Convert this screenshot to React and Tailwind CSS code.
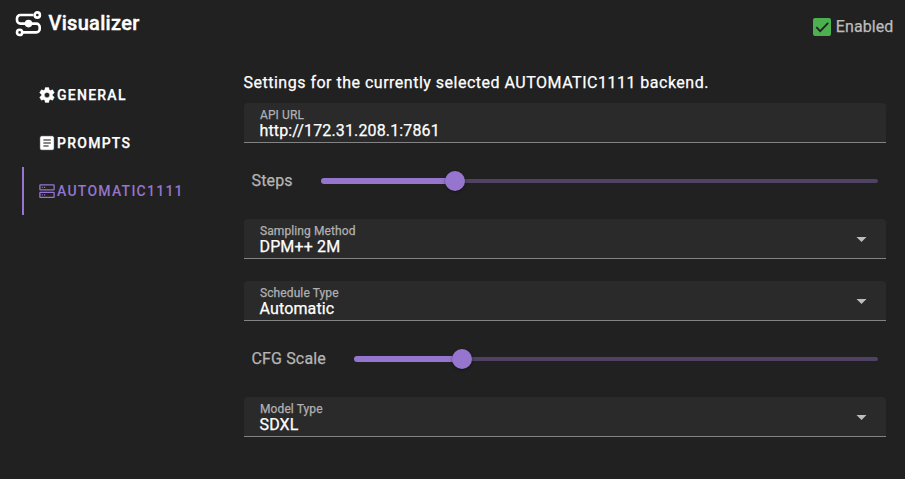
import React from "react";

const COG =
  "M12,15.5A3.5,3.5 0 0,1 8.5,12A3.5,3.5 0 0,1 12,8.5A3.5,3.5 0 0,1 15.5,12A3.5,3.5 0 0,1 12,15.5M19.43,12.97C19.47,12.65 19.5,12.33 19.5,12C19.5,11.67 19.47,11.34 19.43,11L21.54,9.37C21.73,9.22 21.78,8.95 21.66,8.73L19.66,5.27C19.54,5.05 19.27,4.96 19.05,5.05L16.56,6.05C16.04,5.66 15.5,5.32 14.87,5.07L14.5,2.42C14.46,2.18 14.25,2 14,2H10C9.75,2 9.54,2.18 9.5,2.42L9.13,5.07C8.5,5.32 7.96,5.66 7.44,6.05L4.95,5.05C4.73,4.96 4.46,5.05 4.34,5.27L2.34,8.73C2.21,8.95 2.27,9.22 2.46,9.37L4.57,11C4.53,11.34 4.5,11.67 4.5,12C4.5,12.33 4.53,12.65 4.57,12.97L2.46,14.63C2.27,14.78 2.21,15.05 2.34,15.27L4.34,18.73C4.46,18.95 4.73,19.03 4.95,18.95L7.44,17.94C7.96,18.34 8.5,18.68 9.13,18.93L9.5,21.58C9.54,21.82 9.75,22 10,22H14C14.25,22 14.46,21.82 14.5,21.58L14.87,18.93C15.5,18.67 16.04,18.34 16.56,17.94L19.05,18.95C19.27,19.03 19.54,18.95 19.66,18.73L21.66,15.27C21.78,15.05 21.73,14.78 21.54,14.63L19.43,12.97Z";
const TEXT_BOX =
  "M14,17H7V15H14M17,13H7V11H17M17,9H7V7H17M19,3H5C3.89,3 3,3.89 3,5V19A2,2 0 0,0 5,21H19A2,2 0 0,0 21,19V5C21,3.89 20.1,3 19,3Z";

function Glyph({ d }) {
  return (
    <svg
      viewBox="0 0 24 24"
      className="size-[18px] shrink-0"
      fill="currentColor"
      stroke="currentColor"
      strokeWidth="0.5"
    >
      <path d={d} />
    </svg>
  );
}

function ServerIcon() {
  return (
    <svg viewBox="0 0 18 18" className="size-[18px] shrink-0" fill="none" stroke="currentColor" strokeWidth="1.3">
      <rect x="1.9" y="2.9" width="14.2" height="5" rx="0.5" />
      <rect x="1.9" y="10.4" width="14.2" height="5" rx="0.5" />
      <path d="M3.8 5.4h1M6 5.4h1.2M3.8 12.9h1M6 12.9h1.2" />
    </svg>
  );
}

function Logo() {
  return (
    <svg viewBox="0 0 28 28" className="size-7 shrink-0" fill="none" stroke="white">
      <path
        d="M19.5 6H6.4A3.4 3.4 0 0 0 3 9.4V11.2A3.4 3.4 0 0 0 6.4 14.6H22.3A3.4 3.4 0 0 1 25.7 18V20A3.4 3.4 0 0 1 22.3 23.4H9"
        strokeWidth="2.6"
      />
      <circle cx="23.3" cy="6" r="2.6" strokeWidth="2.6" />
      <circle cx="5.6" cy="23.4" r="2.6" strokeWidth="2.6" />
      <circle cx="14.5" cy="14.6" r="3.8" fill="white" stroke="none" />
    </svg>
  );
}

function Tab({ icon, label, active }) {
  return (
    <div
      className={`flex h-12 items-center border-l-2 pl-[14px] text-[14px] font-medium tracking-[1.25px] ${
        active ? "border-[#9575cd] text-[#9575cd]" : "border-transparent text-white [-webkit-text-stroke:0.25px]"
      }`}
    >
      {icon}
      <span className="ml-px">{label}</span>
    </div>
  );
}

function Field({ label, value, select }) {
  return (
    <div className="flex h-10 items-center justify-between rounded-t border-b border-[#838383] bg-[#2a2a2a] pr-[19px] pl-[15.5px]">
      <div className="pt-px [-webkit-text-stroke:0.25px]">
        <div className="ml-[0.5px] h-4 text-[12px] leading-4 tracking-[0.1px] text-[#b0b0b0]">{label}</div>
        <div className="h-4 text-[16px] leading-4 tracking-[0.14px] text-white">{value}</div>
      </div>
      {select && (
        <svg viewBox="0 0 10 5" className="mt-px h-[5px] w-[11px]" fill="#bdbdbd">
          <path d="M0 0h10L5 5z" />
        </svg>
      )}
    </div>
  );
}

function Slider({ label, filled, gap }) {
  return (
    <div className="flex h-8 items-center pr-2 pl-[7.5px]">
      <span className={`shrink-0 text-[16px] tracking-[0.15px] text-[#b5b5b5] [-webkit-text-stroke:0.25px] ${gap}`}>
        {label}
      </span>
      <div className="flex flex-1 items-center">
        <div className={`h-1.5 rounded-l-full bg-[#9575cd] ${filled}`} />
        <div className="z-10 -mx-2.5 size-5 shrink-0 rounded-full bg-[#9575cd] shadow-[0_1px_3px_rgba(0,0,0,0.4)]" />
        <div className="h-1 flex-1 rounded-r-full bg-[#4f4262]" />
      </div>
    </div>
  );
}

export default function App() {
  return (
    <div className="h-[479px] w-[905px] overflow-hidden bg-[#212121] font-[Roboto,sans-serif] text-white">
      <header className="flex h-[71px] items-start justify-between pr-[11.5px] pl-[14px]">
        <div className="flex items-center pt-[9px]">
          <Logo />
          <h1 className="ml-[6.5px] text-[20px] leading-7 font-medium tracking-[0.3px] [-webkit-text-stroke:0.4px]">
            Visualizer
          </h1>
        </div>
        <div className="flex items-center pt-[15px] text-[16px] leading-6 tracking-[0.1px] text-[#bcbcbc] [-webkit-text-stroke:0.25px]">
          <svg viewBox="0 0 18 18" className="mr-[5px] size-[18px]" fill="none">
            <rect width="18" height="18" rx="2" fill="#4caf50" />
            <path d="M3.3 9.2l3.9 3.9L15.2 4.9" stroke="#212121" strokeWidth="1.8" />
          </svg>
          Enabled
        </div>
      </header>
      <div className="flex">
        <nav className="ml-[22px] w-[222px] shrink-0">
          <Tab icon={<Glyph d={COG} />} label="GENERAL" />
          <Tab icon={<Glyph d={TEXT_BOX} />} label="PROMPTS" />
          <Tab icon={<ServerIcon />} label="AUTOMATIC1111" active />
        </nav>
        <main className="w-[642px]">
          <p className="-ml-[0.5px] h-8 text-[16px] leading-6 tracking-[0.5px] [-webkit-text-stroke:0.25px]">
            Settings for the currently selected AUTOMATIC1111 backend.
          </p>
          <Field label="API URL" value="http://172.31.208.1:7861" />
          <div className="pt-[22px] pb-[22px]">
            <Slider label="Steps" filled="w-[134px]" gap="w-[69.5px]" />
          </div>
          <Field label="Sampling Method" value="DPM++ 2M" select />
          <div className="h-[22px]" />
          <Field label="Schedule Type" value="Automatic" select />
          <div className="pt-[22px] pb-[22px]">
            <Slider label="CFG Scale" filled="w-[108px]" gap="w-[102.5px]" />
          </div>
          <Field label="Model Type" value="SDXL" select />
        </main>
      </div>
    </div>
  );
}
